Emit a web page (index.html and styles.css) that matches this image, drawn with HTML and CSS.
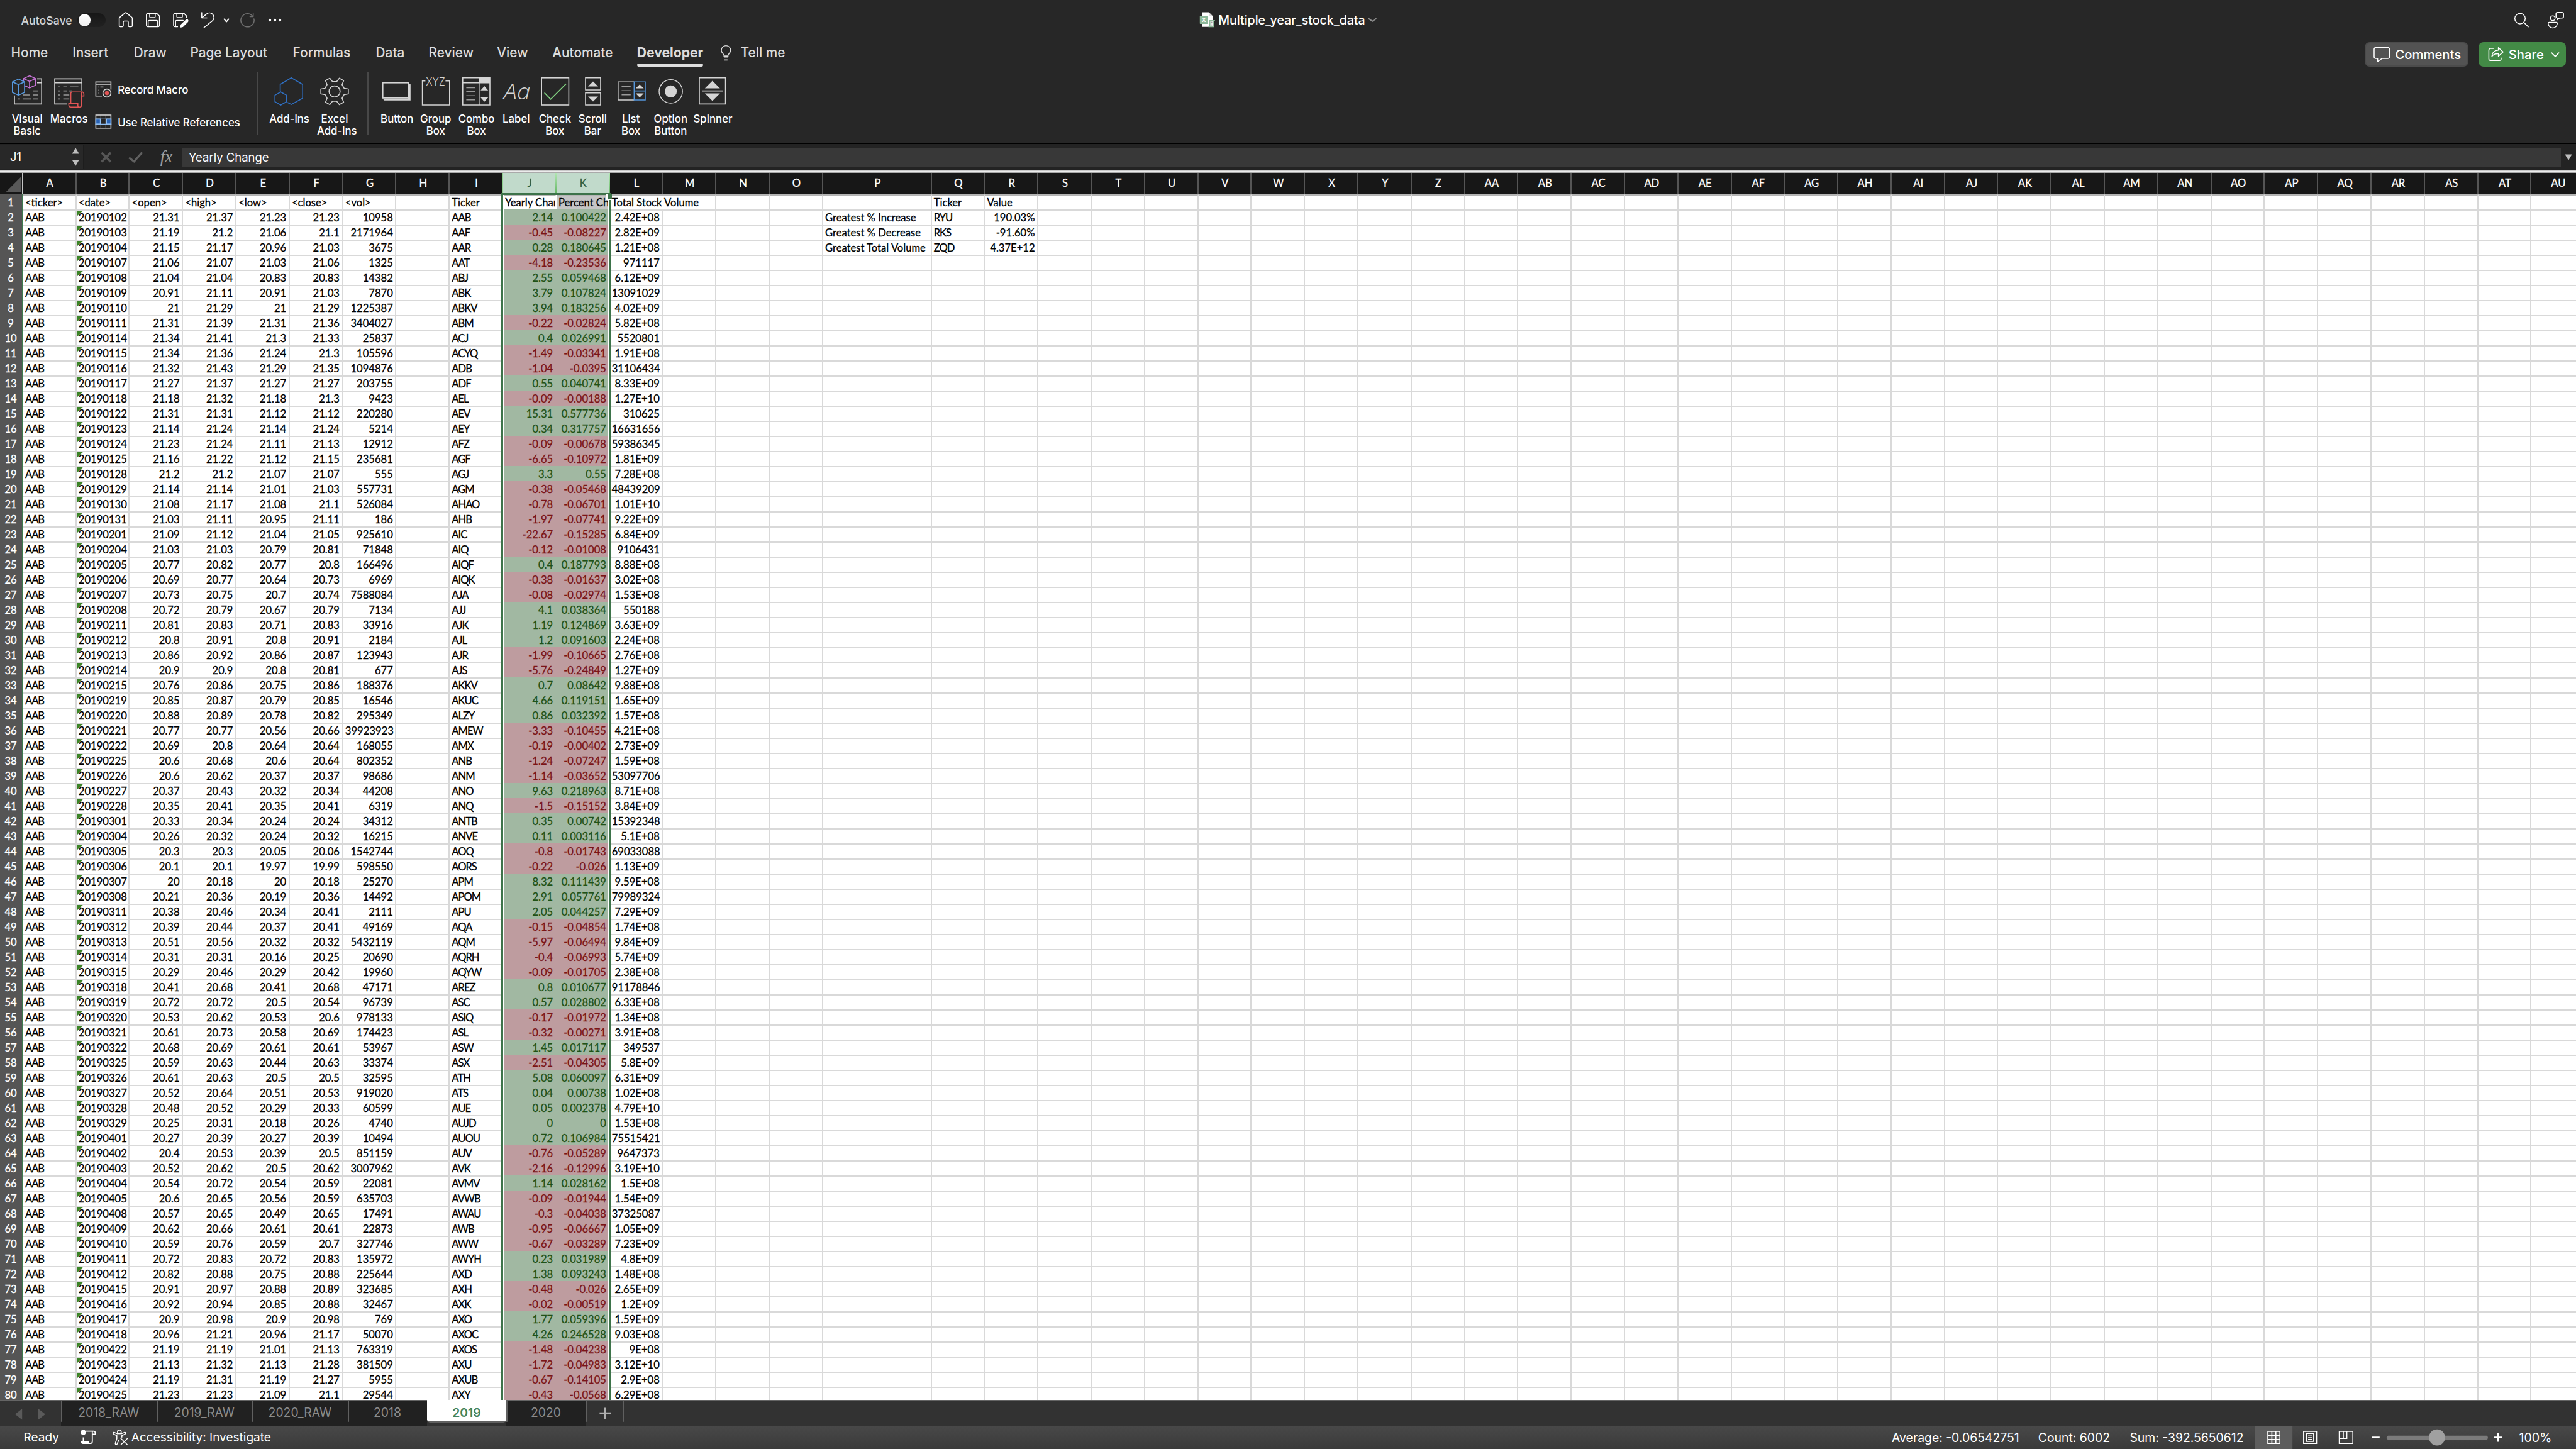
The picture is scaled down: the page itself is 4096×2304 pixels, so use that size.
FILE: index.html
```
<!DOCTYPE html>
<html lang="en">
<head>
<meta charset="utf-8">
<title>Multiple_year_stock_data</title>
<link rel="stylesheet" href="styles.css">
</head>
<body>
<header class="top">
  <div class="titlebar">
    <div class="quick">
      <span class="autosave">AutoSave</span>
      <span class="toggle"><span class="knob"></span></span>
      <svg class="quick-icons" viewBox="230 20 340 40" fill="none" stroke="#fff" stroke-width="1.9" stroke-linejoin="round" stroke-linecap="round">
        <path d="M239 53q-2 0-2-2V36.500q0-1.200 1-2l10.600-8.800q1.400-1.200 2.800 0L262 34.500q1 .8 1 2V51q0 2-2 2h-4q-2 0-2-2v-7q0-2-2-2h-6q-2 0-2 2v7q0 2-2 2z"/>
        <path d="M294 27h18l5 5v18q0 3-3 3h-20q-3 0-3-3V30q0-3 3-3zM297.500 27v6q0 2 2 2h7q2 0 2-2v-6M294.500 53V43q0-2.300 2.300-2.300h14.400q2.300 0 2.300 2.300v10"/>
        <path d="M353 53h-5q-3 0-3-3V30q0-3 3-3h18l5 5v3M351.500 27v6q0 2 2 2h7q2 0 2-2v-6M349 53V43q0-2.300 2.300-2.300H364"/>
        <path d="M359.500 53.500l1-4.200 9.500-9q2-1.600 3 0 1 1.400-.5 2.800l-9.500 9.300z" fill="#fff" stroke-width="2.600"/>
        <path d="M401 25v10.500h10.500M401.800 34.800l8.200-6.600c4-3.600 9-3.200 12.200-.2 4.200 4 4 9.500.3 13.200L405.300 55"/>
        <path d="M445.500 38l4.500 5.200 4.500-5.200" stroke-width="2.400"/>
        <path d="M504.800 37.500A13.200 13.200 0 1 1 502 31.800M503.300 26.500V33h-6.500" stroke="#707070"/>
        <g fill="#fff" stroke="none"><circle cx="536.300" cy="40" r="2.700"/><circle cx="546.300" cy="40" r="2.700"/><circle cx="556.300" cy="40" r="2.700"/></g>
      </svg>
    </div>
    <div class="doc">
      <svg class="doc-icon" viewBox="2384 23 34 34">
        <path d="M2389 25h14l8 8v21h-22z" fill="#fff"/>
        <path d="M2403 25v8h8" fill="#ddd"/>
        <rect x="2385" y="32" width="16" height="16" rx="1" fill="#8db89a"/>
        <text x="2393" y="44" text-anchor="middle" class="doc-x">X</text>
        <path d="M2405 52V41.500h10M2412.500 42v11.500h-10.500" fill="#fff" stroke="#8db89a" stroke-width="2"/>
        <path d="M2408.800 43.500v3.500M2408.800 49v2" stroke="#888" stroke-width="1.600"/>
      </svg>
      <span>Multiple_year_stock_data</span>
      <svg class="doc-chevron" viewBox="2719 34 18 12"><path d="M2721 37.500l7 5 7-5" fill="none" stroke="#8d8d8d" stroke-width="2.600" stroke-linecap="round"/></svg>
    </div>
    <svg class="corner-icons" viewBox="4994 20 106 40" fill="none" stroke="#fff" stroke-width="1.900" stroke-linejoin="round" stroke-linecap="round">
      <circle cx="5009" cy="37" r="10.400"/><path d="M5016.700 44.700l8.600 8.600"/>
      <circle cx="5074" cy="36.300" r="4.700"/>
      <path d="M5067 44.500h14q2 0 2 2c0 5-4 9-9 9s-9-4-9-9q0-2 2-2z"/>
      <path d="M5083.500 24.800h9q3 0 3 3v5q0 3-3 3h-5l-4 3.400v-3.400q-3 0-3-3v-5q0-3 3-3z"/>
    </svg>
  </div>

  <div class="tabrow">
    <nav class="tabs">
      <span>Home</span><span>Insert</span><span>Draw</span><span>Page Layout</span><span>Formulas</span><span>Data</span><span>Review</span><span>View</span><span>Automate</span><span class="current">Developer</span>
      <svg class="bulb" viewBox="1430 86 26 36" fill="none" stroke="#dcdcdc" stroke-width="1.800"><path d="M1439 112.500v-2.500c0-2.500-5.300-5.200-5.300-10.500a9.300 9 0 0 1 18.600 0c0 5.300-5.300 8-5.300 10.500v2.500zM1438.500 111h9M1439.500 115h7"/><path d="M1440 119h6" stroke-width="2.200"/></svg>
      <span class="tell">Tell me</span>
    </nav>
    <div class="actions">
      <span class="btn comments">
        <svg viewBox="4716 92 36 34" fill="none" stroke="#fff" stroke-width="1.900" stroke-linejoin="round"><path d="M4722 95h23.500q3.500 0 3.500 3.500v15q0 3.500-3.500 3.500h-11l-9 6v-6H4722q-3.500 0-3.500-3.500v-15q0-3.500 3.500-3.500z"/></svg>
        Comments
      </span>
      <span class="btn share">
        <svg viewBox="4944 92 34 34" fill="none" stroke="#fff" stroke-width="1.900" stroke-linejoin="round" stroke-linecap="round"><path d="M4956 97h-5.500q-3.500 0-3.500 3.500v17q0 3.500 3.500 3.500h17.500q3.500 0 3.500-3.500V116"/><path d="M4966 95.500l9.300 8.500-9.300 8.500v-5c-6-.3-10 1-13 5.500.5-7 5-12 13-12.500z"/></svg>
        Share
        <svg class="share-chevron" viewBox="5068 102 20 14"><path d="M5071 106l7 7 7-7" fill="none" stroke="#fff" stroke-width="2.200" stroke-linecap="round"/></svg>
      </span>
    </div>
  </div>

  <div class="ribbon">
    <div class="group code">
      <div class="tool"><svg viewBox="14 144 80 78" fill="none" stroke="#d4d4d4" stroke-width="2">
        <path d="M74 157h9v50H29v-17M74 165h9"/>
        <path d="M66 181h10M46 189h14M66 189h10M36 197h4M46 197h16M66 197h10" stroke="#9a9a9a"/>
        <path d="M59 151l12 5.500v13L59 175l-12-5.500v-13zM47 156.500l12 5.500 12-5.500M59 162v13" stroke="#c673d6"/>
        <path d="M37 157.500l12 5.500v21l-12 5.500-12-5.500v-21z" fill="#272727" stroke="#5597dc"/>
        <path d="M25 163l12 5.500 12-5.500M37 168.500v21" stroke="#5597dc"/></svg>Visual<br>Basic</div>
      <div class="tool"><svg viewBox="94 144 86 78" fill="none" stroke="#d4d4d4" stroke-width="2">
        <path d="M134 207h-25v-50h54v23M109 165h54"/>
        <path d="M116 173h4M126 173h8M140 173h16M116 181h4M126 181h8M138 181h6M116 189h4M126 189h12M116 197h4M126 197h12" stroke="#9a9a9a"/>
        <path d="M141 206v-20q0-3 3-3h19q4 0 4 4v4h-5M162 187v23q0 3-3 3h-18q-4 0-4-4v-3h18v4q0 3 3 3M162 190v-3q0-4 3-4" stroke="#e05555"/></svg>Macros</div>
      <div class="stack">
        <div><svg viewBox="188 160 36 36" fill="none" stroke="#d4d4d4" stroke-width="2"><path d="M203 191h-12v-28h30v15M191 167.300h30"/><path d="M196 173h2M200 173h6M196 179h2M196 185h2" stroke="#9a9a9a"/><circle cx="213" cy="185" r="8" fill="#272727"/><circle cx="213" cy="185" r="4.200" fill="#e05555" stroke="none"/></svg><span>Record Macro</span></div>
        <div><svg viewBox="188 224 36 36" fill="none" stroke="#d4d4d4" stroke-width="2"><path d="M201 229v26M211 229v26" stroke="#9a9a9a" stroke-width="1.500"/><rect x="191" y="229" width="30" height="26"/><path d="M191 237h9v10h-9zM212 237h9v10h-9z" fill="#2a63b5" stroke="#8fbdf0"/><path d="M190 237h32M190 247h32" stroke="#8fbdf0" stroke-width="1.600"/></svg><span>Use Relative References</span></div>
      </div>
    </div>
    <div class="group addins">
      <div class="tool"><svg viewBox="520 144 110 78" fill="none" stroke="#2f6fc2" stroke-width="2"><path d="M557 182v-14l22-13 22.500 13v27.500L579 208l-7.500-4M558 183l11.500 6.500v13L558 209l-11.500-6.500v-13z"/></svg>Add-ins</div>
      <div class="tool"><svg viewBox="630 144 70 78" fill="none" stroke="#d4d4d4" stroke-width="2"><path transform="translate(665 182)" stroke-linejoin="round" d="M19-6.200L27.300-4.900V4.900L19 6.200 14.900 13.400 18 21.400 9.600 26.300 4.200 19.600H-4.200L-9.600 26.300-18 21.400-14.900 13.400-19 6.200-27.300 4.900V-4.900L-19-6.200-14.900-13.400-18-21.400-9.600-26.300-4.200-19.600H4.200L9.600-26.300 18-21.400 14.900-13.400z"/><circle cx="665" cy="182" r="11"/></svg>Excel<br>Add-ins</div>
    </div>
    <div class="group controls">
      <div class="tool"><svg viewBox="750 144 78 78" fill="none" stroke="#d4d4d4" stroke-width="2"><rect x="761" y="165" width="51" height="30"/><path d="M812 165l4 3v32h-52l-4-4h51z" fill="#d4d4d4" stroke="none"/></svg>Button</div>
      <div class="tool"><svg viewBox="828 144 76 78" fill="none" stroke="#d4d4d4" stroke-width="2"><path d="M846 161h-6v48h54v-48h-8"/><text x="847" y="170" textLength="38" lengthAdjust="spacingAndGlyphs" class="xyz">XYZ</text></svg>Group<br>Box</div>
      <div class="tool"><svg viewBox="904 144 86 78" fill="none" stroke="#d4d4d4" stroke-width="2"><path d="M920 155h54v54h-54zM920 165h54M952.500 165v44"/><path d="M952 155h22v10h-22z" fill="#d4d4d4" stroke="none"/><path d="M927 174.500h18M927 182.500h18M927 190.500h18M927 198.500h18" stroke="#9a9a9a"/><path d="M955.500 180l7.500-8.500 7.500 8.500zM955.500 194l7.500 8.500 7.500-8.500z" fill="#d4d4d4" stroke="none"/></svg>Combo<br>Box</div>
      <div class="tool"><svg viewBox="990 144 72 78"><text x="1001" y="198" textLength="53" lengthAdjust="spacingAndGlyphs" class="aa">Aa</text></svg>Label</div>
      <div class="tool"><svg viewBox="1062 144 82 78" fill="none" stroke="#d4d4d4" stroke-width="2"><rect x="1076" y="155" width="54" height="54"/><path d="M1081.500 184.500l12.500 13 30.500-30.500" stroke="#84d584"/></svg>Check<br>Box</div>
      <div class="tool"><svg viewBox="1144 144 68 78" fill="none" stroke="#d4d4d4" stroke-width="2"><path d="M1164 155h30v24h-30zM1164 185h30v24h-30z"/><path d="M1169 172l10-10 10 10zM1169 192l10 10 10-10z" fill="#d4d4d4" stroke="none"/></svg>Scroll<br>Bar</div>
      <div class="tool"><svg viewBox="1212 144 84 78" fill="none" stroke="#d4d4d4" stroke-width="2"><path d="M1260 199h-32v-36h32"/><path d="M1235 172.500h18M1235 180.500h18M1235 188.500h18" stroke="#9a9a9a"/><path d="M1260 163h22v36h-22zM1260 181h22" stroke="#5597dc"/><path d="M1263 176l8-8 8 8zM1263 186l8 8 8-8z" fill="#d4d4d4" stroke="none"/></svg>List<br>Box</div>
      <div class="tool"><svg viewBox="1296 144 74 78"><circle cx="1333" cy="182" r="23.200" fill="none" stroke="#d4d4d4" stroke-width="1.800"/><circle cx="1333" cy="182" r="12" fill="#d4d4d4"/></svg>Option<br>Button</div>
      <div class="tool"><svg viewBox="1370 144 94 78" fill="none" stroke="#d4d4d4" stroke-width="2"><path d="M1390 155h52v52h-52zM1395 181h42"/><path d="M1401 176l15-15 15 15zM1401 186l15 15 15-15z" fill="#d4d4d4" stroke="none"/></svg>Spinner</div>
    </div>
  </div>
</header>

<div class="formula">
  <div class="namebox"><span>J1</span><svg viewBox="144 290 18 46" fill="#bdbdbd"><path d="M146 307l7-12 7 12zM146 319l7 12 7-12z"/></svg></div>
  <svg class="formula-icons" viewBox="168 288 194 50" fill="none">
    <path d="M202.500 304l18 18M220.500 304l-18 18" stroke="#565656" stroke-width="4.500"/>
    <path d="M257 314l10 7.500 16-18" stroke="#606060" stroke-width="4"/>
    <text x="319" y="323" class="fx">fx</text>
  </svg>
  <div class="input">Yearly Change</div>
  <svg class="expand" viewBox="5090 294 30 38"><path d="M5098 307h14l-7 12z" fill="#bdbdbd"/></svg>
</div>
<div class="splitter"></div>

<main class="sheet" id="sheet">
  <div class="selection"><span class="handle"></span></div>
</main>

<footer>
  <div class="sheets">
    <svg class="nav" viewBox="0 2784 121 50" fill="#5a5a5a"><path d="M44 2799v22l-14-11zM76 2799v22l14-11z"/></svg>
    <span class="sheet-tab raw">2018_RAW</span><span class="sheet-tab raw">2019_RAW</span><span class="sheet-tab raw">2020_RAW</span><span class="sheet-tab">2018</span><span class="sheet-tab on"><b>2019</b></span><span class="sheet-tab">2020</span>
    <svg class="add" viewBox="1165 2784 76 50"><path d="M1193 2808h22M1204 2797v22" stroke="#b0b0b0" stroke-width="3.400"/></svg>
  </div>
  <div class="status">
    <span class="ready">Ready</span>
    <svg class="script-icon" viewBox="157 2840 36 34"><circle cx="165" cy="2847" r="5" fill="#fff"/><path d="M165 2857v9M170 2844.500h15q4 0 4 4v2h-6" fill="none" stroke="#fff" stroke-width="2.200"/><path d="M183 2845v20q0 4-4 4h-14q-4 0-4-4h15" fill="none" stroke="#fff" stroke-width="2.200"/><path d="M160 2864h16q0 3 3 5.500h-15q-4 0-4-5.500z" fill="#fff"/></svg>
    <svg class="access-icon" viewBox="221 2840 36 34" fill="none" stroke="#fff" stroke-width="1.900" stroke-linejoin="round" stroke-linecap="round"><circle cx="237" cy="2846" r="3.700"/><path d="M234 2850l-7-3q-2-.6-2.500 1t1.500 2.500l6 3v6l-3 9q-.4 2 1.200 2.500t2.400-1.200l3.500-8M240 2850l7-3q2-.6 2.500 1t-1.500 2.500l-6 3v3"/><path d="M240 2859l13 12.500M253 2859l-13 12.500"/></svg>
    <span class="access">Accessibility: Investigate</span>
    <span class="stats"><span>Average: -0.06542751</span><span>Count: 6002</span><span>Sum: -392.5650612</span></span>
    <svg class="views" viewBox="4482 2835 232 45" fill="none" stroke="#fff" stroke-width="2">
      <rect x="4482" y="2835" width="74" height="45" fill="#5d5d5d" stroke="none"/>
      <path d="M4507 2845h24v24h-24zM4507 2853h24M4507 2861h24M4515 2845v24M4523 2845v24"/>
      <path d="M4578 2845h26v24h-26zM4584 2849h14v16h-14zM4587 2854h8M4587 2857.500h8M4587 2861h8" stroke-width="1.800"/>
      <path d="M4649 2845h27v24h-27zM4649 2859h15v-14M4657 2845v14" stroke-width="2"/>
    </svg>
    <svg class="zoomer" viewBox="4714 2835 286 45">
      <path d="M4715 2857h15M4957 2857h17M4965.500 2848.500v17" stroke="#fff" stroke-width="3.600"/>
      <rect x="4744" y="2853.500" width="201" height="8" rx="3" fill="#7b7b7b"/>
      <circle cx="4844" cy="2857" r="16" fill="#a0a0a0"/>
    </svg>
    <span class="percent">100%</span>
  </div>
</footer>
<script src="sheet.js"></script>
</body>
</html>
```
FILE: styles.css
```
/* 1rem is 8px, one eighth of the 64px title-bar module */
html { font-size: 8px; }
* { box-sizing: border-box; }
body {
  margin: 0;
  width: 512rem;
  height: 288rem;
  overflow: hidden;
  display: flex;
  flex-direction: column;
  background: #272727;
  color: #fff;
  font-family: Inter, "Liberation Sans", sans-serif;
}
svg { display: block; flex: none; }

.top { height: 28.6rem; border-bottom: 2px solid #000; flex: none; }

.titlebar { height: 8rem; display: grid; grid-template-columns: 1fr auto 1fr; align-items: center; }
.quick { display: flex; align-items: center; }
.autosave { width: 11.2rem; margin-left: 4.2rem; font-size: 2.21rem; font-weight: 500; color: #d2d2d2; }
.toggle { width: 5.6rem; height: 2.8rem; border-radius: 1.4rem; background: linear-gradient(#171717, #212121); padding: .2rem; }
.knob { display: block; width: 2.4rem; height: 2.4rem; border-radius: 50%; background: linear-gradient(#fff, #eee); }
.quick-icons { width: 34rem; height: 4rem; margin-left: 2rem; }
.doc { display: flex; align-items: center; font-size: 2.44rem; font-weight: 500; }
.doc-icon { width: 3.4rem; height: 3.4rem; margin-right: .4rem; }
.doc-x { font: 700 11px Inter, sans-serif; fill: #fff; }
.doc-chevron { width: 1.8rem; height: 1.2rem; margin-left: .5rem; }
.corner-icons { width: 10.6rem; height: 4rem; justify-self: end; margin-right: 2rem; }

.tabrow { height: 5.2rem; display: flex; justify-content: space-between; }
.tabs {
  display: grid;
  grid-template-columns: 12.2rem 12.2rem 11.2rem 20.4rem 16.5rem 10.5rem 13.6rem 11rem 16.8rem 13.2rem 3.2rem 2.6rem auto;
  margin-left: 2.2rem;
  font-size: 2.6rem;
  font-weight: 500;
  line-height: 4.9rem;
  color: #dcdcdc;
  white-space: nowrap;
}
.current { font-weight: 700; font-size: 2.64rem; position: relative; }
.current::after { content: ""; position: absolute; left: 0; right: 0; top: 4.6rem; height: .6rem; border-radius: .3rem; background: #dedede; }
.bulb { grid-column: 12; width: 2.6rem; height: 3.6rem; margin-top: .6rem; }
.tell { margin-left: 1.6rem; }
.actions { display: flex; gap: 2rem; padding-top: .4rem; margin-right: 2rem; }
.btn { height: 4.8rem; border-radius: 1rem; display: flex; align-items: center; font-size: 2.53rem; font-weight: 500; }
.comments { width: 20.6rem; background: #535353; border: 2px solid #4b4b4b; padding-left: 1.4rem; }
.comments svg { width: 3.6rem; height: 3.4rem; margin-right: .8rem; }
.share { width: 17.4rem; background: #438a46; padding-left: 1.8rem; }
.share svg { width: 3.4rem; height: 3.4rem; margin-right: .8rem; }
.share .share-chevron { width: 2rem; height: 1.4rem; margin: 0 0 0 1.3rem; }

.ribbon { display: flex; margin-top: 1.2rem; height: 12.4rem; font-size: 2.1rem; font-weight: 500; line-height: 2.4rem; }
.group { display: grid; }
.code { width: 51.2rem; padding-left: 1.4rem; grid-template-columns: 8rem 8.6rem auto; border-right: 2px solid #484848; }
.addins { width: 22rem; padding-left: .8rem; grid-template-columns: 11rem 7rem; border-right: 2px solid #484848; }
.controls { padding-left: 1.8rem; grid-template-columns: 7.8rem 7.6rem 8.6rem 7.2rem 8.2rem 6.800rem 8.4rem 7.4rem 9.4rem; }
.tool { text-align: center; white-space: nowrap; }
.tool svg { height: 7.8rem; width: 100%; margin-bottom: .25rem; }
.xyz { font: 300 22px Inter, sans-serif; fill: #d4d4d4; stroke: none; }
.aa { font: italic 300 44px "Open Sans", sans-serif; fill: #d4d4d4; }
.stack { padding: .2rem 0 0 .8rem; }
.stack div { height: 6.4rem; display: flex; align-items: center; }
.stack svg { width: 3.6rem; height: 3.6rem; margin-right: 1rem; }
.stack span { padding-top: .4rem; }

.formula { height: 5.2rem; display: flex; flex: none; background: #232323; font-size: 2.31rem; }
.namebox { width: 16.8rem; margin: .2rem 0; padding: 0 .6rem 0 2rem; display: flex; justify-content: space-between; align-items: center; background: #282828; border-right: 2px solid #1d1d1d; }
.namebox span { padding-bottom: .2rem; }
.namebox svg { width: 1.8rem; height: 4.6rem; }
.formula-icons { width: 19.4rem; height: 5rem; margin-top: .2rem; }
.fx { font: italic 34px "Liberation Serif", serif; fill: #9c9c9c; }
.input { flex: 1; margin: .8rem 0 .6rem; padding-left: 1.3rem; line-height: 3.8rem; background: #383838; }
.expand { width: 3rem; height: 3.8rem; margin-top: .8rem; }
.splitter { height: .6rem; flex: none; background: linear-gradient(#8b8b8b, #c9c9c9 30%, #f4f4f4 55%, #c4c4c4 80%, #8f8f8f); }

.sheet {
  flex: 1;
  min-height: 0;
  overflow: hidden;
  position: relative;
  background: #fff;
  color: #000;
  font: 2.075rem/2.8rem Lato, Carlito, sans-serif;
  -webkit-text-stroke: .3px currentColor;
  white-space: nowrap;
}
.row { display: flex; height: 3rem; width: 520rem; }
.cell { width: 10.6rem; flex: none; padding: 0 .4rem; border: 0 solid #d9d9d9; border-width: 2px 2px 0 0; overflow: hidden; position: relative; }
.wide { width: 21.6rem; }
.double { width: 21.2rem; }
.num { text-align: right; padding-right: .45rem; }
.ticker { letter-spacing: -.13rem; }
.flag::before { content: ""; position: absolute; left: 0; top: 0; width: 1.3rem; height: 1.2rem; background: #3b8427; clip-path: polygon(0 0, 100% 0, 0 100%); }
.up { background: #a1b8a2; border-color: #a1b8a2; color: #1f5216; }
.down { background: #be9c9f; border-color: #be9c9f; color: #7b1416; }
.active { border-color: #fff; }
.picked { background: #c5c5c5; border-color: #c5c5c5; }
.rownum { width: 4.6rem; flex: none; padding: 2px .1rem 0 0; text-align: center; background: #555; border-right: 2px solid #3d7a4e; color: #fff; }
.first .cell { border-top-color: #b4b4b4; }

.heads { height: 4.2rem; line-height: 4.1rem; background: #171717; color: #fff; }
.heads .cell { border-width: 0 2px 0 0; border-color: #555; text-align: center; padding: 0 0 0 2px; }
.heads .sel { background: #c1dacb; color: #2f5f42; border-image: linear-gradient(#b5e8b5, #5fb35f) 1; }
.heads .before { border-color: #8fd08f; }
.corner { width: 4.6rem; flex: none; border-right: 2px solid #c4c4c4; display: flex; justify-content: flex-end; align-items: flex-end; padding: 0 .2rem .4rem 0; }
.corner::after { content: ""; width: 3rem; height: 3rem; background: #585858; clip-path: polygon(100% 0, 100% 100%, 0 100%); }

.selection { position: absolute; z-index: 2; left: 99.6rem; top: 4rem; width: 21.8rem; bottom: 0; border: 3px solid #3d734a; border-bottom: 0; box-shadow: inset 2px 0 #fff, inset -2px 0 #fff; }
.handle { position: absolute; right: -.65rem; top: -.2rem; width: 1.2rem; height: 1.2rem; background: #3d734a; border: solid #fff; border-width: 0 0 2px 2px; }

footer { height: 9.8rem; flex: none; }
.sheets { height: 5.3rem; border-top: 2px solid #646464; border-bottom: 1px solid #000; background: #323232; display: flex; font-size: 2.42rem; color: #8b8b8b; }
.nav { width: 12.1rem; height: 5rem; }
.sheet-tab { width: 15.8rem; background: linear-gradient(#606060, #606060) 0 0/2px 4.1rem no-repeat #212121; text-align: center; line-height: 4.6rem; }
.raw { width: 19rem; }
.on { background: none; position: relative; width: 15.7rem; color: #44835a; }
.on b { display: block; height: 4.6rem; line-height: 5rem; margin-top: -2px; background: #fff; border-bottom: 2px solid #606060; border-radius: 0 0 .6rem .6rem; font-weight: 600; }
.add { width: 7.6rem; height: 5rem; background: linear-gradient(#606060, #606060) 0 0/2px 4.1rem no-repeat, linear-gradient(#606060, #606060) 100% 0/2px 4.1rem no-repeat; }

.status { height: 4.5rem; display: flex; align-items: center; background: linear-gradient(#484848, #3a3a3a); font-size: 2.38rem; padding-bottom: .1rem; white-space: nowrap; }
.ready { width: 11rem; margin-left: 4.7rem; }
.script-icon { width: 3.6rem; height: 3.4rem; }
.access-icon { width: 3.6rem; height: 3.4rem; margin: 0 .4rem 0 2.8rem; }
.access { flex: 1; }
.stats { display: grid; grid-template-columns: 29.1rem 18.2rem 24.9rem; font-size: 2.42rem; }
.views { width: 23.2rem; height: 4.5rem; }
.zoomer { width: 28.6rem; height: 4.5rem; margin-right: .7rem; }
.percent { width: 11.3rem; font-size: 2.44rem; }
```
FILE: sheet.js
```
// date, open, high, low, close, volume, ticker, yearly change, percent change, total volume
const DATA = `
20190102 21.31 21.37 21.23 21.23 10958 AAB 2.14 0.100422 2.42E+08
20190103 21.19 21.2 21.06 21.1 2171964 AAF -0.45 -0.08227 2.82E+09
20190104 21.15 21.17 20.96 21.03 3675 AAR 0.28 0.180645 1.21E+08
20190107 21.06 21.07 21.03 21.06 1325 AAT -4.18 -0.23536 971117
20190108 21.04 21.04 20.83 20.83 14382 ABJ 2.55 0.059468 6.12E+09
20190109 20.91 21.11 20.91 21.03 7870 ABK 3.79 0.107824 13091029
20190110 21 21.29 21 21.29 1225387 ABKV 3.94 0.183256 4.02E+09
20190111 21.31 21.39 21.31 21.36 3404027 ABM -0.22 -0.02824 5.82E+08
20190114 21.34 21.41 21.3 21.33 25837 ACJ 0.4 0.026991 5520801
20190115 21.34 21.36 21.24 21.3 105596 ACYQ -1.49 -0.03341 1.91E+08
20190116 21.32 21.43 21.29 21.35 1094876 ADB -1.04 -0.0395 31106434
20190117 21.27 21.37 21.27 21.27 203755 ADF 0.55 0.040741 8.33E+09
20190118 21.18 21.32 21.18 21.3 9423 AEL -0.09 -0.00188 1.27E+10
20190122 21.31 21.31 21.12 21.12 220280 AEV 15.31 0.577736 310625
20190123 21.14 21.24 21.14 21.24 5214 AEY 0.34 0.317757 16631656
20190124 21.23 21.24 21.11 21.13 12912 AFZ -0.09 -0.00678 59386345
20190125 21.16 21.22 21.12 21.15 235681 AGF -6.65 -0.10972 1.81E+09
20190128 21.2 21.2 21.07 21.07 555 AGJ 3.3 0.55 7.28E+08
20190129 21.14 21.14 21.01 21.03 557731 AGM -0.38 -0.05468 48439209
20190130 21.08 21.17 21.08 21.1 526084 AHAO -0.78 -0.06701 1.01E+10
20190131 21.03 21.11 20.95 21.11 186 AHB -1.97 -0.07741 9.22E+09
20190201 21.09 21.12 21.04 21.05 925610 AIC -22.67 -0.15285 6.84E+09
20190204 21.03 21.03 20.79 20.81 71848 AIQ -0.12 -0.01008 9106431
20190205 20.77 20.82 20.77 20.8 166496 AIQF 0.4 0.187793 8.88E+08
20190206 20.69 20.77 20.64 20.73 6969 AIQK -0.38 -0.01637 3.02E+08
20190207 20.73 20.75 20.7 20.74 7588084 AJA -0.08 -0.02974 1.53E+08
20190208 20.72 20.79 20.67 20.79 7134 AJJ 4.1 0.038364 550188
20190211 20.81 20.83 20.71 20.83 33916 AJK 1.19 0.124869 3.63E+09
20190212 20.8 20.91 20.8 20.91 2184 AJL 1.2 0.091603 2.24E+08
20190213 20.86 20.92 20.86 20.87 123943 AJR -1.99 -0.10665 2.76E+08
20190214 20.9 20.9 20.8 20.81 677 AJS -5.76 -0.24849 1.27E+09
20190215 20.76 20.86 20.75 20.86 188376 AKKV 0.7 0.08642 9.88E+08
20190219 20.85 20.87 20.79 20.85 16546 AKUC 4.66 0.119151 1.65E+09
20190220 20.88 20.89 20.78 20.82 295349 ALZY 0.86 0.032392 1.57E+08
20190221 20.77 20.77 20.56 20.66 39923923 AMEW -3.33 -0.10455 4.21E+08
20190222 20.69 20.8 20.64 20.64 168055 AMX -0.19 -0.00402 2.73E+09
20190225 20.6 20.68 20.6 20.64 802352 ANB -1.24 -0.07247 1.59E+08
20190226 20.6 20.62 20.37 20.37 98686 ANM -1.14 -0.03652 53097706
20190227 20.37 20.43 20.32 20.34 44208 ANO 9.63 0.218963 8.71E+08
20190228 20.35 20.41 20.35 20.41 6319 ANQ -1.5 -0.15152 3.84E+09
20190301 20.33 20.34 20.24 20.24 34312 ANTB 0.35 0.00742 15392348
20190304 20.26 20.32 20.24 20.32 16215 ANVE 0.11 0.003116 5.1E+08
20190305 20.3 20.3 20.05 20.06 1542744 AOQ -0.8 -0.01743 69033088
20190306 20.1 20.1 19.97 19.99 598550 AORS -0.22 -0.026 1.13E+09
20190307 20 20.18 20 20.18 25270 APM 8.32 0.111439 9.59E+08
20190308 20.21 20.36 20.19 20.36 14492 APOM 2.91 0.057761 79989324
20190311 20.38 20.46 20.34 20.41 2111 APU 2.05 0.044257 7.29E+09
20190312 20.39 20.44 20.37 20.41 49169 AQA -0.15 -0.04854 1.74E+08
20190313 20.51 20.56 20.32 20.32 5432119 AQM -5.97 -0.06494 9.84E+09
20190314 20.31 20.31 20.16 20.25 20690 AQRH -0.4 -0.06993 5.74E+09
20190315 20.29 20.46 20.29 20.42 19960 AQYW -0.09 -0.01705 2.38E+08
20190318 20.41 20.68 20.41 20.68 47171 AREZ 0.8 0.010677 91178846
20190319 20.72 20.72 20.5 20.54 96739 ASC 0.57 0.028802 6.33E+08
20190320 20.53 20.62 20.53 20.6 978133 ASIQ -0.17 -0.01972 1.34E+08
20190321 20.61 20.73 20.58 20.69 174423 ASL -0.32 -0.00271 3.91E+08
20190322 20.68 20.69 20.61 20.61 53967 ASW 1.45 0.017117 349537
20190325 20.59 20.63 20.44 20.63 33374 ASX -2.51 -0.04305 5.8E+09
20190326 20.61 20.63 20.5 20.5 32595 ATH 5.08 0.060097 6.31E+09
20190327 20.52 20.64 20.51 20.53 919020 ATS 0.04 0.00738 1.02E+08
20190328 20.48 20.52 20.29 20.33 60599 AUE 0.05 0.002378 4.79E+10
20190329 20.25 20.31 20.18 20.26 4740 AUJD 0 0 1.53E+08
20190401 20.27 20.39 20.27 20.39 10494 AUOU 0.72 0.106984 75515421
20190402 20.4 20.53 20.39 20.5 851159 AUV -0.76 -0.05289 9647373
20190403 20.52 20.62 20.5 20.62 3007962 AVK -2.16 -0.12996 3.19E+10
20190404 20.54 20.72 20.54 20.59 22081 AVMV 1.14 0.028162 1.5E+08
20190405 20.6 20.65 20.56 20.59 635703 AVWB -0.09 -0.01944 1.54E+09
20190408 20.57 20.65 20.49 20.65 17491 AWAU -0.3 -0.04038 37325087
20190409 20.62 20.66 20.61 20.61 22873 AWB -0.95 -0.06667 1.05E+09
20190410 20.59 20.76 20.59 20.7 327746 AWW -0.67 -0.03289 7.23E+09
20190411 20.72 20.83 20.72 20.83 135972 AWYH 0.23 0.031989 4.8E+09
20190412 20.82 20.88 20.75 20.88 225644 AXD 1.38 0.093243 1.48E+08
20190415 20.91 20.97 20.88 20.89 323685 AXH -0.48 -0.026 2.65E+09
20190416 20.92 20.94 20.85 20.88 32467 AXK -0.02 -0.00519 1.2E+09
20190417 20.9 20.98 20.9 20.98 769 AXO 1.77 0.059396 1.59E+09
20190418 20.96 21.21 20.96 21.17 50070 AXOC 4.26 0.246528 9.03E+08
20190422 21.19 21.19 21.01 21.13 763319 AXOS -1.48 -0.04238 9E+08
20190423 21.13 21.32 21.13 21.28 381509 AXU -1.72 -0.04983 3.12E+10
20190424 21.19 21.31 21.19 21.27 5955 AXUB -0.67 -0.14105 2.9E+08
20190425 21.23 21.23 21.09 21.1 29544 AXY -0.43 -0.0568 6.29E+08
`.trim().split('\n').map(line => line.split(' '));

const COLUMNS = 47;
const SUMMARY = [
  ['Greatest % Increase', 'RYU', '190.03%'],
  ['Greatest % Decrease', 'RKS', '-91.60%'],
  ['Greatest Total Volume', 'ZQD', '4.37E+12'],
];
const HEADINGS = {
  A: '<ticker>', B: '<date>', C: '<open>', D: '<high>', E: '<low>', F: '<close>', G: '<vol>',
  I: 'Ticker', J: 'Yearly Change', K: 'Percent Change', L: 'Total Stock Volume', Q: 'Ticker', R: 'Value',
};

const columnName = i => (i < 26 ? '' : 'A') + String.fromCharCode(65 + i % 26);
const names = Array.from({ length: COLUMNS }, (_, i) => columnName(i));
const sheet = document.getElementById('sheet');

function element(className, text) {
  const node = document.createElement('div');
  node.className = className;
  if (text) node.textContent = text;
  return node;
}

function addRow(className, lead, cells) {
  const row = element(className);
  row.append(lead, ...cells);
  sheet.append(row);
}

const width = name => (name === 'P' ? ' wide' : '');

addRow('row heads', element('corner'), names.map(name => {
  const mark = name === 'J' || name === 'K' ? ' sel' : name === 'I' ? ' before' : '';
  return element('cell' + width(name) + mark, name);
}));

addRow('row first', element('rownum', '1'), names.filter(name => name !== 'M').map(name => {
  const mark = { J: ' active', K: ' picked', L: ' double' }[name] || '';
  return element('cell' + width(name) + mark, HEADINGS[name]);
}));

DATA.forEach((d, r) => {
  const tone = d[7].startsWith('-') ? 'down' : 'up';
  const sum = SUMMARY[r] || [];
  const values = {
    A: ['AAB', 'ticker'], B: [d[0], 'num flag'], C: [d[1], 'num'], D: [d[2], 'num'], E: [d[3], 'num'],
    F: [d[4], 'num'], G: [d[5], 'num'], I: [d[6], 'ticker'], J: [d[7], 'num ' + tone],
    K: [d[8], 'num ' + tone], L: [d[9], 'num'], P: [sum[0], ''], Q: [sum[1], 'ticker'], R: [sum[2], 'num'],
  };
  addRow('row', element('rownum', String(r + 2)), names.map(name => {
    const [text, kind] = values[name] || ['', ''];
    return element('cell ' + kind + width(name), text);
  }));
});
```
